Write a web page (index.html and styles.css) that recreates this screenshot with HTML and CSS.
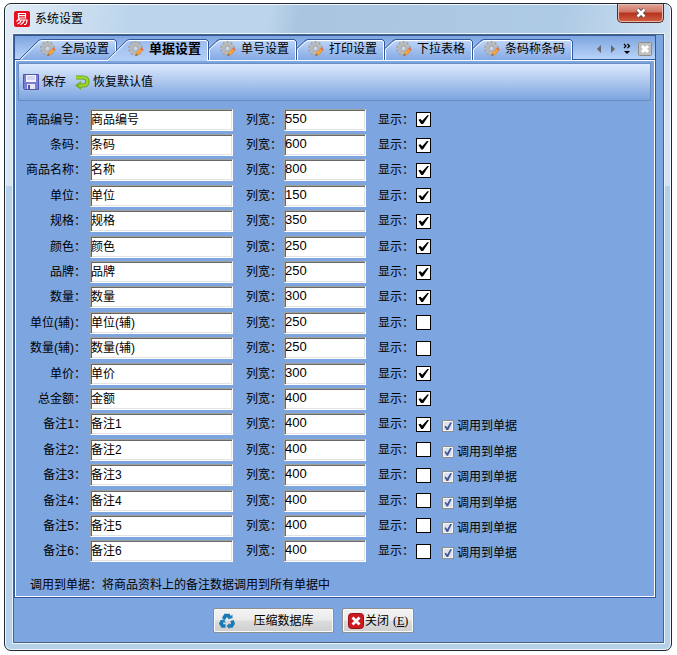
FILE: index.html
```
<!DOCTYPE html>
<html lang="zh-CN">
<head>
  <meta charset="UTF-8" />
  <meta name="viewport" content="width=device-width, initial-scale=1" />
  <title>系统设置</title>
  <link rel="stylesheet" href="styles.css">
</head>
<body>

<!-- Shared icons -->
<svg class="defs" aria-hidden="true">
  <linearGradient id="tabFace" x1="0" y1="0" x2="0" y2="1">
    <stop offset="0" stop-color="#bdd5f9"/>
    <stop offset="1" stop-color="#84a9e3"/>
  </linearGradient>
  <linearGradient id="tabActive" x1="0" y1="0" x2="0" y2="1">
    <stop offset="0" stop-color="#9dbdf0"/>
    <stop offset="1" stop-color="#b4cff6"/>
  </linearGradient>
  <symbol id="gear" viewBox="0 0 16 16">
    <circle cx="7.5" cy="7.5" r="6.2" fill="none" stroke="#a3a3a3" stroke-width="2.4" stroke-dasharray="2.4 1.5"/>
    <circle cx="7.5" cy="7.5" r="4.3" fill="none" stroke="#b9b9b9" stroke-width="3.4"/>
    <circle cx="7.5" cy="7.5" r="2.5" fill="#c5d6ee" stroke="#999" stroke-width="0.7"/>
    <path d="M7.5 14.8l1-3 4.8-5 2 2-4.8 5z" fill="#f6a63c" stroke="#d98324" stroke-width="0.5"/>
    <path d="M12.3 7.8l1-1.3 2.2 2-1.2 1.3z" fill="#e0675c"/>
    <path d="M7.3 15l.9-2.6 1.6 1.6z" fill="#7a6a55"/>
  </symbol>
</svg>

<div class="window">
  <header class="titlebar">
    <svg class="logo" viewBox="0 0 16 16" aria-hidden="true">
      <rect width="16" height="16" rx="2" fill="#e60f20"/>
      <path d="M4.500 2.500h7v4.500h-7zM4.500 4.700h7M5.500 7.500L2.500 10.500M4.500 9h8.500q0 3.500-1.500 4.500h-1.500M7.500 9q-1 2.500-4 4M10.500 9q-1 3-4 4.700" fill="none" stroke="#fff" stroke-width="1.2"/>
    </svg>
    <h1>系统设置</h1>
    <button class="window-close" aria-label="关闭窗口">
      <svg viewBox="0 0 12 10" aria-hidden="true"><path d="M2.500 1.500l7 7M9.500 1.500l-7 7" stroke="#5b4646" stroke-width="4.400"/><path d="M2.500 1.500l7 7M9.500 1.500l-7 7" stroke="#fff" stroke-width="2.600"/></svg>
    </button>
  </header>

  <main class="client">
    <section class="panel">
      <nav class="tabs">
        <button class="tab tab-first">
          <svg class="shape" viewBox="0 0 98 21"><path class="edge" d="M0 21L18.500 2.500Q20.500.5 23 .5H95.500L97.500 2.500V21"/><path class="face" fill="url(#tabFace)" d="M1.500 21L19 3.500Q21 1.500 23 1.500H95L96.500 3V21"/></svg>
          <svg class="icon"><use href="#gear"/></svg>全局设置
        </button>
        <button class="tab tab-active">
          <svg class="shape" viewBox="0 0 101 22"><path class="edge" d="M0 20.500L17.500 2.500Q19.500.5 22 .5H98.500L100.500 2.500V20.500"/><path class="face" fill="url(#tabActive)" d="M-1 22L18 3.500Q20 1.500 22 1.500H98L99.500 3V22"/></svg>
          <svg class="icon"><use href="#gear"/></svg>单据设置
        </button>
        <button class="tab">
          <svg class="shape" viewBox="0 0 88 21"><path class="edge" d="M0 9.500L7 2.500Q9 .5 11 .5H85.500L87.500 2.500V21"/><path class="face" fill="url(#tabFace)" d="M.5 21V10.500L8 3.500Q10 1.500 12 1.500H85L86.500 3V21"/></svg>
          <svg class="icon"><use href="#gear"/></svg>单号设置
        </button>
        <button class="tab">
          <svg class="shape" viewBox="0 0 88 21"><path class="edge" d="M0 9.500L7 2.500Q9 .5 11 .5H85.500L87.500 2.500V21"/><path class="face" fill="url(#tabFace)" d="M.5 21V10.500L8 3.500Q10 1.500 12 1.500H85L86.500 3V21"/></svg>
          <svg class="icon"><use href="#gear"/></svg>打印设置
        </button>
        <button class="tab">
          <svg class="shape" viewBox="0 0 88 21"><path class="edge" d="M0 9.500L7 2.500Q9 .5 11 .5H85.500L87.500 2.500V21"/><path class="face" fill="url(#tabFace)" d="M.5 21V10.500L8 3.500Q10 1.500 12 1.500H85L86.500 3V21"/></svg>
          <svg class="icon"><use href="#gear"/></svg>下拉表格
        </button>
        <button class="tab tab-long">
          <svg class="shape" viewBox="0 0 100 21"><path class="edge" d="M0 9.500L7 2.500Q9 .5 11 .5H97.500L99.500 2.500V21"/><path class="face" fill="url(#tabFace)" d="M.5 21V10.500L8 3.500Q10 1.500 12 1.500H97L98.500 3V21"/></svg>
          <svg class="icon"><use href="#gear"/></svg>条码称条码
        </button>
        <div class="tab-tools">
          <button aria-label="向左"><svg viewBox="0 0 14 14"><path d="M9 3v8L5 7z" fill="#666"/></svg></button>
          <button aria-label="向右"><svg viewBox="0 0 14 14"><path d="M5 3v8l4-4z" fill="#666"/></svg></button>
          <button aria-label="更多"><svg viewBox="0 0 14 14"><path d="M4 2l2 2-2 2M7.500 2l2 2-2 2" fill="none" stroke="#000" stroke-width="1.200"/><path d="M4 9h6l-3 3z"/></svg></button>
          <button aria-label="关闭标签"><svg viewBox="0 0 14 14"><rect x=".5" y=".5" width="13" height="13" rx="1" fill="#c0c0c0" stroke="#8c8c8c"/><path d="M4 4l6 6M10 4l-6 6" stroke="#fff" stroke-width="3"/></svg></button>
        </div>
      </nav>

      <div class="page">
        <div class="toolbar">
          <button>
            <svg viewBox="0 0 16 16" aria-hidden="true"><path d="M.5.5h15v15h-14l-1-1z" fill="#7b7dd2" stroke="#5354ae"/><path d="M3 1h10v7H3z" fill="#f2f4ff"/><path d="M4 3h8M4 5h8" stroke="#b4b9e6"/><path d="M4 10h8v5H4z" fill="#e4e6f4"/><path d="M5 11h2v4H5z" fill="#5152ad"/></svg>保存
          </button>
          <button>
            <svg viewBox="0 0 16 16" aria-hidden="true"><path d="M2 3.500h7q4.500 0 4.500 4t-4.500 4H6" fill="none" stroke="#5f9e12" stroke-width="4"/><path d="M7 7v9l-6-4.500z" fill="#6fb01a"/><path d="M2 3.500h7q4.500 0 4.500 4t-4.500 4H5" fill="none" stroke="#a0d531" stroke-width="2.400"/></svg>恢复默认值
          </button>
        </div>

        <form class="fields" id="fields"></form>

        <p class="note">调用到单据：将商品资料上的备注数据调用到所有单据中</p>
      </div>
    </section>

    <footer class="actions">
      <button class="compress">
        <svg viewBox="0 0 16 16" aria-hidden="true"><g fill="none" stroke="#1a78b4" stroke-width="3.600"><path d="M4.500 6l2-3.500h3l1.500 3"/><path d="M13 7.500l1 3-1.500 2.500H9"/><path d="M6.500 13H3.500L2 10.500l1.500-3"/></g><path d="M9 5.500h4.500V1.500zM10.500 10v6L7.500 13zM1 7.500L5.500 6l1 4z" fill="#1f86c0"/></svg>
        <span>压缩数据库</span>
      </button>
      <button class="close">
        <svg viewBox="0 0 16 16" aria-hidden="true"><rect x=".5" y=".5" width="15" height="15" rx="3" fill="#cb1a1f" stroke="#9c0f13"/><path d="M4.500 4.500l7 7M11.500 4.500l-7 7" stroke="#fff" stroke-width="2.800"/></svg>关闭<span class="key">(<u>E</u>)</span>
      </button>
    </footer>
  </main>
</div>

<script>
  // label, name, width, shown, has the "调用到单据" option
  const fields = [
    ["商品编号", "商品编号", 550, true],
    ["条码", "条码", 600, true],
    ["商品名称", "名称", 800, true],
    ["单位", "单位", 150, true],
    ["规格", "规格", 350, true],
    ["颜色", "颜色", 250, true],
    ["品牌", "品牌", 250, true],
    ["数量", "数量", 300, true],
    ["单位(辅)", "单位(辅)", 250, false],
    ["数量(辅)", "数量(辅)", 250, false],
    ["单价", "单价", 300, true],
    ["总金额", "金额", 400, true],
    ["备注1", "备注1", 400, true, true],
    ["备注2", "备注2", 400, false, true],
    ["备注3", "备注3", 400, false, true],
    ["备注4", "备注4", 400, false, true],
    ["备注5", "备注5", 400, false, true],
    ["备注6", "备注6", 400, false, true]
  ];

  document.getElementById('fields').innerHTML = fields.map(([label, name, width, shown, extra], i) => `
    <div class="row">
      <label for="name${i}">${label}：</label>
      <input type="text" id="name${i}" value="${name}">
      <label class="mid" for="width${i}">列宽：</label>
      <input type="text" class="num" id="width${i}" value="${width}">
      <label class="mid" for="show${i}">显示：</label>
      <input type="checkbox" class="show" id="show${i}" ${shown ? 'checked' : ''}>
      ${extra ? `<label class="extra"><input type="checkbox" checked>调用到单据</label>` : ''}
    </div>`).join('');
</script>

</body>
</html>
```

FILE: styles.css
```
* {
  box-sizing: border-box;
}
body {
  margin: 0;
  height: 100vh;
  padding: 3px 5px 4px 4px;
  display: flex;
  background: #fff;
  color: #000;
  font: 12px/16px "Liberation Sans", "Noto Sans CJK SC", sans-serif;
}
button, input {
  font: inherit;
  color: inherit;
}
button {
  border: none;
  background: none;
  padding: 0;
  white-space: nowrap;
}
.defs {
  position: absolute;
  width: 0;
  height: 0;
}
.window {
  flex: 1;
  display: flex;
  flex-direction: column;
  padding: 0 7px 7px 8px;
  border: 1px solid #1d2733;
  border-radius: 7px;
  background:
    linear-gradient(transparent 182px, #b5d1ea 182px),
    linear-gradient(100deg, #e2ecf6 0, #bdd5ec 16%, #bdd5ec 34%, #a9c5e0 38%, #aecbe5 72%, #d3e3f3 88%, #cfe1f2 100%);
  box-shadow: inset 0 0 0 1px #f2f8fd;
}
.titlebar {
  display: flex;
  align-items: center;
  height: 30px;
  padding-left: 1px;
}
.logo {
  width: 16px;
  height: 16px;
}
.titlebar h1 {
  margin: 0 auto 0 5px;
  font-size: 12px;
  font-weight: normal;
}
.window-close {
  align-self: flex-start;
  display: flex;
  align-items: center;
  justify-content: center;
  width: 47px;
  height: 19px;
  border: 1px solid #5a2a2a;
  border-top: none;
  border-radius: 0 0 5px 5px;
  background: linear-gradient(#e0a799, #cf7463 45%, #b8311c 50%, #cf6245);
  box-shadow: inset 0 0 0 1px #e9b8ac;
}
.window-close svg {
  width: 12px;
  height: 10px;
}
.client {
  flex: 1;
  display: flex;
  flex-direction: column;
  border: 1px solid #4d6480;
  outline: 1px solid #eaf4fc;
  background: #7da5e0;
}
.panel {
  flex: 1;
  display: flex;
  flex-direction: column;
  margin-right: 7px;
  border: 1px solid #33589a;
}
.tabs {
  display: flex;
  height: 24px;
  padding: 3px 3px 0 4px;
  border-bottom: 1px solid #33589a;
  background: linear-gradient(#7da5e0, #b9d3f8);
}
.tab {
  position: relative;
  z-index: 0;
  display: flex;
  align-items: center;
  justify-content: flex-end;
  gap: 5px;
  width: 88px;
  padding-right: 8px;
}
.tab-first {
  width: 98px;
}
.tab-active {
  z-index: 1;
  width: 101px;
  margin-left: -9px;
  font-size: 13px;
  font-weight: bold;
}
.tab-long {
  width: 100px;
}
.shape {
  position: absolute;
  z-index: -1;
  inset: 0;
  width: 100%;
  height: 21px;
}
.tab-active .shape {
  height: 22px;
}
.edge {
  fill: none;
  stroke: #33589a;
}
.face {
  stroke: #fff;
}
.icon {
  width: 16px;
  height: 16px;
}
.tab-tools {
  display: flex;
  align-items: center;
  margin-left: auto;
}
.tab-tools svg {
  display: block;
  width: 14px;
  height: 14px;
}
.tab-tools button:last-child {
  margin-left: 4px;
}
.page {
  flex: 1;
  display: flex;
  flex-direction: column;
  border: 1px solid #fff;
}
.toolbar {
  display: flex;
  align-items: center;
  gap: 8px;
  height: 38px;
  margin: 2px 3px 0 2px;
  padding-left: 4px;
  border: 1px solid #6b8cc0;
  background: linear-gradient(#dce9fc, #7da5e0);
}
.toolbar button {
  display: flex;
  align-items: center;
  gap: 3px;
}
.toolbar svg {
  width: 16px;
  height: 16px;
}
.fields {
  flex: 1;
  display: flex;
  flex-direction: column;
  margin-top: 6px;
}
.row {
  flex: 1;
  display: grid;
  grid-template-columns: 70px 143px 43px 82px 42px 15px auto;
  column-gap: 4px;
  align-items: center;
  justify-content: start;
}
.row label {
  text-align: right;
  white-space: nowrap;
}
.row .mid {
  margin-right: -2px;
}
.row input[type="text"] {
  width: 100%;
  height: 22px;
  padding: 0 0 3px;
  border: 1px solid;
  border-color: #a0a0a0 #fff #fff #a0a0a0;
  background: #fff;
  box-shadow: inset 1px 1px #696969, inset -1px -1px #e3e3e3;
}
.row .num {
  padding-left: 1px;
  font-size: 13px;
}
.row input[type="checkbox"] {
  appearance: none;
  display: flex;
  align-items: center;
  justify-content: center;
  margin: 0;
}
.row .show {
  width: 15px;
  height: 15px;
  border: 1px solid #000;
  background: #fff;
}
.show:checked::before {
  content: "";
  width: 11px;
  height: 9px;
  background: #000;
  clip-path: polygon(4% 50%, 22% 42%, 38% 62%, 85% 0, 100% 0, 45% 100%, 30% 100%);
}
.row .extra {
  display: flex;
  align-items: center;
  gap: 3px;
  padding: 4px 0 0 7px;
}
.extra input {
  width: 12px;
  height: 12px;
  border: 1px solid #8e8f8f;
  background: #dde3ee;
  box-shadow: inset 0 0 0 1px #f4f4f4;
}
.extra input::before {
  content: "";
  width: 8px;
  height: 8px;
  background: #41579a;
  clip-path: polygon(5% 50%, 22% 42%, 40% 65%, 78% 0, 100% 0, 50% 100%, 35% 100%);
}
.note {
  margin: 13px 0 3px 14px;
}
.actions {
  display: flex;
  align-items: flex-start;
  justify-content: center;
  gap: 8px;
  height: 44px;
  padding: 10px 50px 0 0;
}
.actions button {
  display: flex;
  align-items: center;
  height: 25px;
  padding: 0 5px;
  border: 1px solid #8e8f8f;
  border-radius: 2px;
  background: linear-gradient(#f3f3f3, #ebebeb 48%, #dcdcdc 52%, #cfcfcf);
  box-shadow: inset 0 0 0 1px #fafafa;
}
.actions svg {
  flex: none;
  width: 16px;
  height: 16px;
}
.compress {
  width: 121px;
}
.compress span {
  margin: 0 auto;
  padding-left: 4px;
}
.close {
  width: 72px;
  gap: 1px;
}
.key {
  margin-left: 3px;
  font-family: "Liberation Serif", serif;
}
```
